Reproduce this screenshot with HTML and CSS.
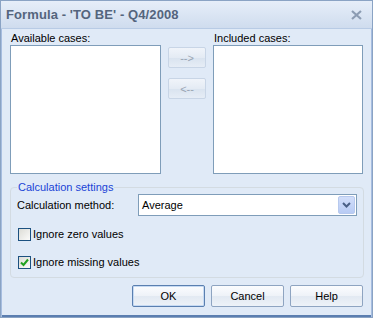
FILE: index.html
```html
<!DOCTYPE html>
<html>
<head>
<meta charset="utf-8">
<link rel="stylesheet" href="styles.css">
</head>
<body>
<div class="window">
  <div class="titlebar">
    <span class="title">Formula - 'TO BE' - Q4/2008</span>
    <svg class="close" width="11" height="10" viewBox="0 0 11 10">
      <path d="M1 1 L10 9 M10 1 L1 9" stroke="#8c9cb3" stroke-width="2.2" fill="none"/>
    </svg>
  </div>
  <div class="content">
    <div class="lists">
      <div class="col">
        <div class="label">Available cases:</div>
        <div class="listbox"></div>
      </div>
      <div class="movers">
        <button class="mbtn">--&gt;</button>
        <button class="mbtn">&lt;--</button>
      </div>
      <div class="col">
        <div class="label">Included cases:</div>
        <div class="listbox"></div>
      </div>
    </div>
    <fieldset class="group">
      <legend>Calculation settings</legend>
      <div class="row method">
        <span class="mlabel">Calculation method:</span>
        <div class="combo">
          <span class="cval">Average</span>
          <span class="cbtn">
            <svg width="9" height="6" viewBox="0 0 9 6"><path d="M1 1 L4.5 4.5 L8 1" stroke="#4a5f86" stroke-width="2" fill="none"/></svg>
          </span>
        </div>
      </div>
      <label class="check first"><span class="box"></span>Ignore zero values</label>
      <label class="check second"><span class="box">
        <svg width="11" height="11" viewBox="0 0 11 11"><path d="M2 5.5 L4.5 8 L9 2.5" stroke="#21a121" stroke-width="2" fill="none"/></svg>
      </span>Ignore missing values</label>
    </fieldset>
    <div class="actions">
      <button class="btn default">OK</button>
      <button class="btn">Cancel</button>
      <button class="btn">Help</button>
    </div>
  </div>
</div>
</body>
</html>
```

FILE: styles.css
```css
html, body { margin: 0; padding: 0; }
body { font-family: "Liberation Sans", Arial, sans-serif; font-size: 11px; color: #000; }
.window {
  width: 373px; height: 318px; box-sizing: border-box;
  border: 1px solid #8aa3c4;
  background: #e0eaf7;
  display: flex; flex-direction: column;
  box-shadow: inset 1px 0 0 #a6bde0, inset -1px 0 0 #a6bde0, inset 0 -2px 0 #5b7eb0;
}
.titlebar {
  height: 28px; box-sizing: border-box;
  display: flex; align-items: center; justify-content: space-between;
  padding: 0 10px 0 5px;
  background: linear-gradient(#e6eef9, #cfdcee);
  border-bottom: 1px solid #b8cbe5;
}
.title { font-weight: bold; font-size: 13px; color: #54657d; letter-spacing: 0.1px; }
.close { margin-top: 1px; }
.content { padding: 2px 9px 0 9px; display: flex; flex-direction: column; }
.lists { display: flex; gap: 7px; }
.col { display: flex; flex-direction: column; }
.label { height: 14px; line-height: 14px; padding-left: 1px; }
.listbox {
  width: 151px; height: 129px; box-sizing: border-box;
  background: #fff; border: 1px solid #7f9db9;
}
.col:last-child .listbox { width: 150px; }
.movers { display: flex; flex-direction: column; gap: 10px; padding-top: 16px; }
.mbtn {
  width: 38px; height: 21px; padding: 0;
  font-family: inherit; font-size: 11px; color: #99a4b3;
  border: 1px solid #c8d5e6; border-radius: 2px;
  background: linear-gradient(#f0f4fa, #e4ebf4 50%, #d9e3ef 51%, #e6edf6);
}
.group {
  margin: 7px 0 0 0; padding: 1px 6px 0 6px;
  border: 1px solid #d3dbe2; border-radius: 4px;
  height: 97px; box-sizing: border-box;
}
.group legend { color: #1a44d6; padding: 0 1px 0 1px; margin-left: 0; line-height: 12px; }
.row { display: flex; align-items: center; }
.method { height: 22px; }
.mlabel { width: 121px; }
.combo {
  width: 219px; height: 22px; box-sizing: border-box;
  border: 1px solid #7f9db9; background: #fff;
  display: flex; align-items: center; justify-content: space-between;
  padding: 0 1px 0 3px;
}
.cbtn {
  width: 17px; height: 18px; box-sizing: border-box;
  border: 1px solid #b7c9ee; border-radius: 2px;
  background: linear-gradient(#d2defa, #b8cbf4);
  display: flex; align-items: center; justify-content: center;
}
.check { display: flex; align-items: center; height: 14px; }
.check.first { margin-top: 11px; }
.check.second { margin-top: 14px; }
.box {
  width: 13px; height: 13px; box-sizing: border-box;
  border: 1px solid #1c5180; margin: 0 2px 0 1px;
  background: linear-gradient(135deg, #dcdcd6, #fbfbfa);
  display: flex; align-items: center; justify-content: center;
}
.actions { display: flex; justify-content: flex-end; gap: 6px; margin-top: 7px; }
.btn {
  width: 73px; height: 22px; padding: 0;
  font-family: inherit; font-size: 11px; color: #000;
  border: 1px solid #8ea4c1; border-radius: 2px;
  background: linear-gradient(#fbfcfe, #eef2f8 50%, #e2e9f2 51%, #edf2f8);
}
.btn.default { border-color: #5a7fb0; box-shadow: inset 0 0 0 1px #c6daf3; }
```
